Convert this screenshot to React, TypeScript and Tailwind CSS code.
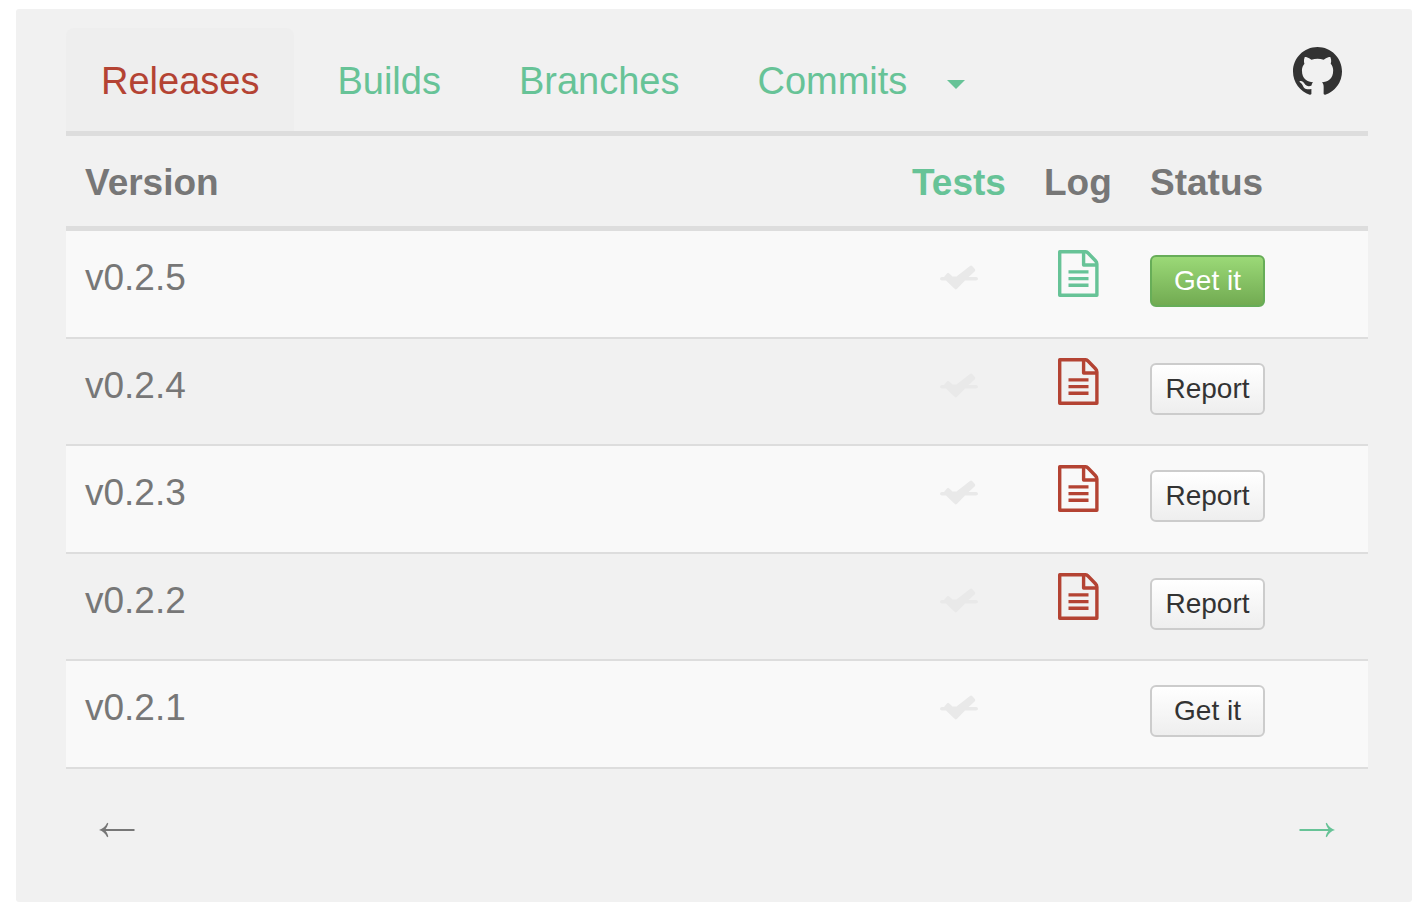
import type { ReactNode } from "react";

type Release = {
  version: string;
  log: "good" | "bad" | null;
  action: string;
  latest?: boolean;
};

const releases: Release[] = [
  { version: "v0.2.5", log: "good", action: "Get it", latest: true },
  { version: "v0.2.4", log: "bad", action: "Report" },
  { version: "v0.2.3", log: "bad", action: "Report" },
  { version: "v0.2.2", log: "bad", action: "Report" },
  { version: "v0.2.1", log: null, action: "Get it" },
];

function GithubMark() {
  return (
    <svg viewBox="0 0 16 16" className="size-[49px]" fill="currentColor" aria-hidden="true">
      <path d="M8 0C3.58 0 0 3.58 0 8c0 3.54 2.29 6.53 5.47 7.59.4.07.55-.17.55-.38 0-.19-.01-.82-.01-1.49-2.01.37-2.53-.49-2.69-.94-.09-.23-.48-.94-.82-1.13-.28-.15-.68-.52-.01-.53.63-.01 1.08.58 1.23.82.72 1.21 1.87.87 2.33.66.07-.52.28-.87.51-1.07-1.78-.2-3.64-.89-3.64-3.95 0-.87.31-1.59.82-2.15-.08-.2-.36-1.02.08-2.12 0 0 .67-.21 2.2.82.64-.18 1.32-.27 2-.27s1.36.09 2 .27c1.53-1.04 2.2-.82 2.2-.82.44 1.1.16 1.92.08 2.12.51.56.82 1.27.82 2.15 0 3.07-1.87 3.75-3.65 3.95.29.25.54.73.54 1.48 0 1.07-.01 1.93-.01 2.2 0 .21.15.46.55.38A8.01 8.01 0 0 0 16 8c0-4.42-3.58-8-8-8z" />
    </svg>
  );
}

function LogIcon() {
  return (
    <svg viewBox="0 0 41 47" className="h-[47px] w-[41px]" fill="none" stroke="currentColor" strokeWidth="3.4" aria-hidden="true">
      <path strokeLinejoin="round" d="M1.7 1.7H27.5Q29 1.9 30 3L37.5 10.7Q38.8 12 38.9 14V45.3H1.7Z" />
      <path strokeLinejoin="round" d="M25.6 2V15H39" />
      <path d="M10.5 21.9H30.5M10.5 28.6H30.5M10.5 35.3H30.5" />
    </svg>
  );
}

// A tick with a bar through it: no test results for this version
function NoTestsIcon() {
  return (
    <svg viewBox="0 0 38 26" className="h-[26px] w-[38px]" fill="currentColor" aria-hidden="true">
      <path d="M2 12H4L7.2 8.2Q8 7.4 9 8.2L12.5 11.6H16.5L30 .9Q31.2 0 32.4 1.2L34.8 4Q35.8 5.2 34.6 6.4L28.6 12H36Q38 12.2 38 13.8T36 15.6H25L17 23.8Q15.8 25 14.6 23.8L6 15.6H2Q0 15.4 0 13.8T2 12Z" />
    </svg>
  );
}

function LongArrow({ direction }: { direction: "left" | "right" }) {
  return (
    <svg viewBox="0 0 36 16" className={`h-4 w-9 ${direction === "right" ? "rotate-180" : ""}`} fill="currentColor" aria-hidden="true">
      <path d="M0 8C4 6.8 6.5 4.5 8.2.8L9.3 1.6C8.6 3.8 7.8 5.5 6.6 6.9H35.5V9.1H6.6C7.8 10.5 8.6 12.2 9.3 14.4L8.2 15.2C6.5 11.5 4 9.2 0 8Z" />
    </svg>
  );
}

function Tab({ active, children }: { active?: boolean; children: ReactNode }) {
  return (
    <li>
      <a
        href="#"
        className={`flex h-[103px] items-center rounded-t-lg px-[35px] pt-[3px] ${active ? "bg-[#eeeeee] text-[#b44333]" : "text-[#67c397]"}`}
      >
        {children}
      </a>
    </li>
  );
}

export default function App() {
  return (
    <div className="min-h-screen bg-white pt-[9px] pr-3 pb-[13px] pl-4 font-['Liberation_Sans',Arial,sans-serif] text-[38px] leading-[44px] text-[#777777]">
      <main className="rounded-[3px] bg-[#f1f1f1] pt-[19px] pr-11 pb-16 pl-[50px]">
        <nav className="flex items-start justify-between border-b-[5px] border-[#dddddd]">
          <ul className="flex gap-2">
            <Tab active>Releases</Tab>
            <Tab>Builds</Tab>
            <Tab>Branches</Tab>
            <Tab>
              Commits
              <span className="mt-1.5 ml-10 border-x-[9px] border-t-[9px] border-x-transparent border-t-[#67c397]" />
            </Tab>
          </ul>
          <a href="#" aria-label="GitHub" className="mt-[19px] mr-[26px] text-[#333333]">
            <GithubMark />
          </a>
        </nav>

        <table className="w-full table-fixed border-separate border-spacing-0 text-[37px]">
          <thead>
            <tr className="h-[95px] text-left *:border-b-[5px] *:border-[#dddddd] *:px-[19px] *:pt-[3px]">
              <th>Version</th>
              <th className="w-[132px]">
                <a href="#" className="text-[#67c397]">Tests</a>
              </th>
              <th className="w-[106px]">Log</th>
              <th className="w-[237px]">Status</th>
            </tr>
          </thead>
          <tbody>
            {releases.map((r) => (
              <tr key={r.version} className="h-[107px] align-top *:border-b-2 *:border-[#dddddd] odd:h-[108px] odd:bg-[#f9f9f9] last:h-[107px]">
                <td className="px-[19px] pt-[25px]">{r.version}</td>
                <td className="pt-[34px] text-[#e9e9e9]">
                  <div className="flex justify-center">
                    <NoTestsIcon />
                  </div>
                </td>
                <td className="pt-[19px]">
                  {r.log && (
                    <a
                      href="#"
                      aria-label={`Log for ${r.version}`}
                      className={`flex justify-center ${r.log === "good" ? "text-[#67c397]" : "text-[#b44333]"}`}
                    >
                      <LogIcon />
                    </a>
                  )}
                </td>
                <td className="px-[19px] pt-6">
                  <button
                    type="button"
                    className={`block h-[52px] w-[115px] rounded-md border-2 bg-linear-to-b text-[28px] leading-8 ${
                      r.latest
                        ? "border-[#67ad58] from-[#9bd977] to-[#72ab52] text-white"
                        : "border-[#cccccc] from-white to-[#eeeeee] text-[#333333]"
                    }`}
                  >
                    {r.action}
                  </button>
                </td>
              </tr>
            ))}
          </tbody>
        </table>

        <div className="flex justify-between px-[33px] pt-[53px]">
          <button type="button" aria-label="Previous page" disabled>
            <LongArrow direction="left" />
          </button>
          <a href="#" aria-label="Next page" className="text-[#67c397]">
            <LongArrow direction="right" />
          </a>
        </div>
      </main>
    </div>
  );
}
